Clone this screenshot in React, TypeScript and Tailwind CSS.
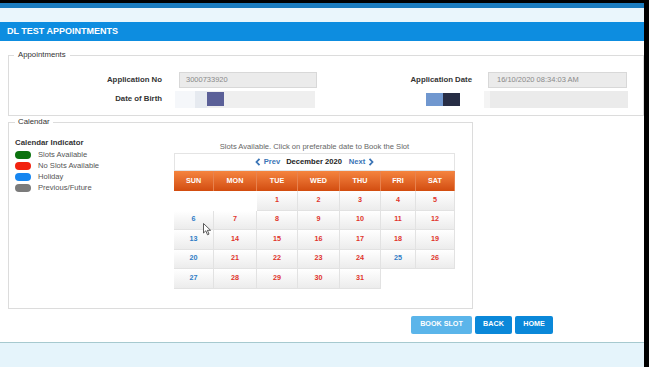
import React from 'react'

const cols = ['SUN', 'MON', 'TUE', 'WED', 'THU', 'FRI', 'SAT']

const weeks: (number | null)[][] = [
    [null, null, 1, 2, 3, 4, 5],
    [6, 7, 8, 9, 10, 11, 12],
    [13, 14, 15, 16, 17, 18, 19],
    [20, 21, 22, 23, 24, 25, 26],
    [27, 28, 29, 30, 31, null, null],
]

const legend = [
    { color: 'bg-[#0c720f]', label: 'Slots Available' },
    { color: 'bg-[#f2220f]', label: 'No Slots Available' },
    { color: 'bg-[#1686f0]', label: 'Holiday' },
    { color: 'bg-[#7b7b7b]', label: 'Previous/Future' },
]

function Chevron({ dir }: { dir: 'left' | 'right' }) {
    return (
        <svg width="6" height="8" viewBox="0 0 6 8" className="shrink-0">
            <polyline
                points={dir === 'left' ? '4.5,0.8 1.5,4 4.5,7.2' : '1.5,0.8 4.5,4 1.5,7.2'}
                fill="none"
                stroke="#3a74b6"
                strokeWidth="1.8"
            />
        </svg>
    )
}

export default function App() {
    return (
        <div className="w-[649px] h-[367px] bg-black overflow-hidden font-['Liberation_Sans',Arial,sans-serif] relative">
            <div className="w-[644px] h-full flex flex-col">
                <div className="h-[3px] bg-black" />
                <div className="h-[5px] bg-[#1b7cbf]" />
                <div className="h-[14px] bg-[#eaf6fc]" />
                <div className="h-[19px] bg-[#0d8de0] flex items-center pl-[7px] text-white text-[9px] font-bold">
                    DL TEST APPOINTMENTS
                </div>

                {/* main panel */}
                <div className="h-[302px] bg-white border-b border-[#a6c9cf] pt-[8px] pl-[8px]">
                    <fieldset className="border border-[#dcdcdc] w-[636px] pt-[11px] pb-[8px]">
                        <legend className="ml-[5px] px-[4px] text-[7.8px] leading-[12px] text-[#333]">Appointments</legend>
                        <div className="flex flex-col gap-[3px]">
                            <div className="flex items-center h-[16px]">
                                <span className="w-[153px] text-right text-[7.8px] font-bold text-[#333]">Application No</span>
                                <div className="ml-[17px] w-[138px] h-[16px] bg-[#ebebeb] border border-[#d8d8d8] flex items-center pl-[6px] text-[7.5px] text-[#8a8a8a]">
                                    3000733920
                                </div>
                                <span className="w-[155px] text-right text-[7.8px] font-bold text-[#333]">Application Date</span>
                                <div className="ml-[16px] w-[139px] h-[16px] bg-[#ebebeb] border border-[#d8d8d8] flex items-center pl-[8px] text-[7.5px] text-[#8a8a8a]">
                                    16/10/2020 08:34:03 AM
                                </div>
                            </div>
                            <div className="flex items-center h-[16px]">
                                <span className="w-[153px] text-right text-[7.8px] font-bold text-[#333]">Date of Birth</span>
                                <div className="ml-[13px] w-[140px] h-[17px] bg-[#efefef] flex items-center">
                                    <div className="w-[20px] h-full bg-[#f5f7fa]" />
                                    <div className="w-[12px] h-full bg-[#e6eaf0]" />
                                    <div className="w-[17px] h-[14px] bg-[#5b6098]" />
                                </div>
                                <div className="w-[151px] flex justify-end pr-[6px]">
                                    <div className="w-[17px] h-[13px] bg-[#7097cf]" />
                                    <div className="w-[17px] h-[13px] bg-[#272d45]" />
                                </div>
                                <div className="ml-[18px] w-[144px] h-[17px] bg-[#ebebeb] flex">
                                    <div className="w-[6px] h-full bg-[#f4f4f4]" />
                                </div>
                            </div>
                        </div>
                    </fieldset>

                    <fieldset className="border border-[#dcdcdc] w-[465px] pl-[6px] pb-[19px]">
                        <legend className="px-[3px] text-[7.8px] leading-[12px] text-[#333]">Calendar</legend>
                        <div className="flex items-start">
                            <div className="w-[159px] pt-[10px]">
                                <div className="text-[7.8px] font-bold text-[#333] leading-[10px]">Calendar Indicator</div>
                                <div className="flex flex-col mt-[1px]">
                                    {legend.map((l) => (
                                        <div key={l.label} className="flex items-center h-[11px]">
                                            <span className={`w-[16px] h-[8px] rounded-full ${l.color}`} />
                                            <span className="ml-[7px] text-[7.6px] text-[#555]">{l.label}</span>
                                        </div>
                                    ))}
                                </div>
                            </div>

                            <div className="w-[281px] pt-[13px] flex flex-col">
                                <div className="h-[12px] text-center text-[7.6px] text-[#666] leading-[12px]">
                                    Slots Available. Click on preferable date to Book the Slot
                                </div>
                                <div className="h-[18px] border border-[#e4e4e4] flex items-center justify-center text-[7.6px] font-bold">
                                    <Chevron dir="left" />
                                    <span className="ml-[3px] text-[#3a74b6]">Prev</span>
                                    <span className="ml-[6px] text-[#222]">December 2020</span>
                                    <span className="ml-[7px] text-[#3a74b6]">Next</span>
                                    <span className="ml-[3px]"><Chevron dir="right" /></span>
                                </div>
                                <div className="grid grid-cols-[40px_43px_41px_42px_41px_35px_39px]">
                                    {cols.map((c) => (
                                        <div
                                            key={c}
                                            className="h-[20px] flex items-center justify-center bg-linear-to-b from-[#f5843e] to-[#d24c0e] border-r border-[#e8824e] text-white text-[7.2px] font-bold"
                                        >
                                            {c}
                                        </div>
                                    ))}
                                    {weeks.flat().map((d, i) =>
                                        d === null ? (
                                            <div key={i} className="h-[19.5px]" />
                                        ) : (
                                            <div
                                                key={i}
                                                className={`h-[19.5px] flex items-center justify-center bg-linear-to-b from-white to-[#ececec] border-r border-b border-[#e2e2e2] text-[7.2px] font-bold ${
                                                    i % 7 === 0 || d === 25 ? 'text-[#2f7cc6]' : 'text-[#e0332b]'
                                                }`}
                                            >
                                                {d}
                                            </div>
                                        )
                                    )}
                                </div>
                            </div>
                        </div>
                    </fieldset>

                    <div className="flex gap-[3px] ml-[403px] mt-[7px] text-white text-[7.2px] font-bold">
                        <button className="w-[61px] h-[18px] rounded-[2px] bg-[#5bb5ea]">BOOK SLOT</button>
                        <button className="w-[37px] h-[18px] rounded-[2px] bg-[#0a88d9]">BACK</button>
                        <button className="w-[38px] h-[18px] rounded-[2px] bg-[#0a88d9]">HOME</button>
                    </div>
                </div>

                <div className="flex-1 bg-[#e5f4fb]" />
            </div>

            {/* mouse pointer */}
            <svg width="9" height="13" viewBox="0 0 9 13" className="absolute left-[203px] top-[223px]">
                <path d="M0.5,0.5 L0.5,10 L2.8,7.8 L4.5,11.8 L6,11.1 L4.4,7.3 L7.6,7.3 Z" fill="white" stroke="#333" strokeWidth="0.8" />
            </svg>
        </div>
    )
}
